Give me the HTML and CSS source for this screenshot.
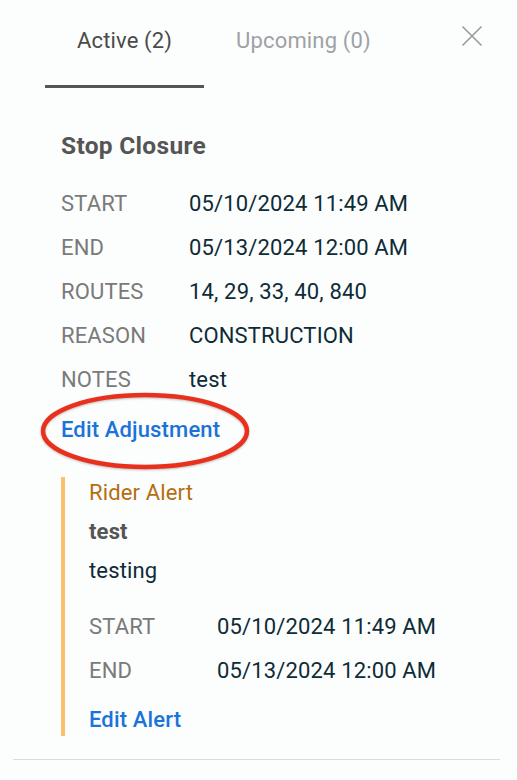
FILE: index.html
```html
<!DOCTYPE html>
<html lang="en">
<head>
    <meta charset="UTF-8">
    <meta name="viewport" content="width=device-width, initial-scale=1.0">
    <title>Adjustments</title>
    <link rel="stylesheet" href="styles.css">
</head>
<body>
    <div class="panel">
        <div class="tabs">
            <div class="tab active">Active (2)</div>
            <div class="tab">Upcoming (0)</div>
            <button class="close" aria-label="Close">
                <svg width="22" height="22" viewBox="0 0 22 22">
                    <path d="M1.5 1.5 L20.5 20.5 M20.5 1.5 L1.5 20.5" stroke="#9a9a9a" stroke-width="1.6" fill="none"/>
                </svg>
            </button>
        </div>

        <div class="content">
            <div class="adj-title">Stop Closure</div>
            <div class="rows">
                <div class="label">START</div><div class="value">05/10/2024 11:49 AM</div>
                <div class="label">END</div><div class="value">05/13/2024 12:00 AM</div>
                <div class="label">ROUTES</div><div class="value">14, 29, 33, 40, 840</div>
                <div class="label">REASON</div><div class="value">CONSTRUCTION</div>
                <div class="label">NOTES</div><div class="value">test</div>
            </div>
            <div class="edit-wrap">
                <a class="link" href="#">Edit Adjustment</a>
                <!-- annotation circle drawn over the link -->
                <svg class="circled" width="216" height="82" viewBox="0 0 216 82">
                    <ellipse cx="107" cy="41" rx="102" ry="36" fill="none" stroke="#e9301c" stroke-width="4.5"/>
                </svg>
            </div>

            <div class="alert">
                <div class="alert-type">Rider Alert</div>
                <div class="alert-head">test</div>
                <div class="alert-body">testing</div>
                <div class="rows alert-rows">
                    <div class="label">START</div><div class="value">05/10/2024 11:49 AM</div>
                    <div class="label">END</div><div class="value">05/13/2024 12:00 AM</div>
                </div>
                <a class="link alert-link" href="#">Edit Alert</a>
            </div>
        </div>

        <div class="divider"></div>
    </div>
</body>
</html>
```

FILE: styles.css
```css
body {
    margin: 0;
    background: #fcfdfd;
    font-family: Roboto, "Noto Sans", Arial, sans-serif;
    font-size: 22px;
    letter-spacing: 0.15px;
}
.panel {
    height: 780px;
    border-right: 1px solid #d9d9d9;
    box-sizing: border-box;
    overflow: hidden;
}
.tabs {
    display: flex;
    align-items: flex-start;
    padding-left: 45px;
}
.tab {
    padding: 28px 32px 31px;
    line-height: 26px;
    color: #9ea1a5;
    border-bottom: 3px solid transparent;
}
.tab.active {
    color: #4a4a4a;
    border-bottom-color: #555;
}
.close {
    margin: 25px 34px 0 auto;
    padding: 0;
    border: none;
    background: none;
    width: 22px;
    height: 22px;
}
.content {
    padding: 37px 0 0 61px;
}
.adj-title {
    font-size: 24.5px;
    font-weight: bold;
    letter-spacing: 0.3px;
    color: #555;
    line-height: 42px;
    margin-bottom: 15px;
}
.rows {
    display: grid;
    grid-template-columns: 128px 1fr;
    line-height: 44px;
}
.label {
    color: #7a7a7a;
}
.value {
    color: #0e2b36;
}
.edit-wrap {
    position: relative;
    margin-top: 12px;
    line-height: 32px;
}
.link {
    color: #1a73d9;
    font-weight: 500;
    text-decoration: none;
}
.circled {
    position: absolute;
    left: -23px;
    top: -24px;
    filter: drop-shadow(0 1px 1px rgba(0, 0, 0, 0.25));
}
.alert {
    margin-top: 31px;
    border-left: 4px solid #fbc06b;
    padding-left: 24px;
}
.alert-type {
    color: #b46e0f;
    line-height: 32px;
}
.alert-head {
    font-weight: bold;
    color: #555;
    line-height: 32px;
    margin-top: 7px;
}
.alert-body {
    color: #0e2b36;
    line-height: 32px;
    margin-top: 7px;
}
.alert-rows {
    margin-top: 18px;
}
.alert-link {
    display: block;
    line-height: 32px;
    margin-top: 5px;
    padding-top: 6px;
}
.divider {
    margin: 23px 17px 0 13px;
    border-top: 1px solid #dcdcdc;
}
```
